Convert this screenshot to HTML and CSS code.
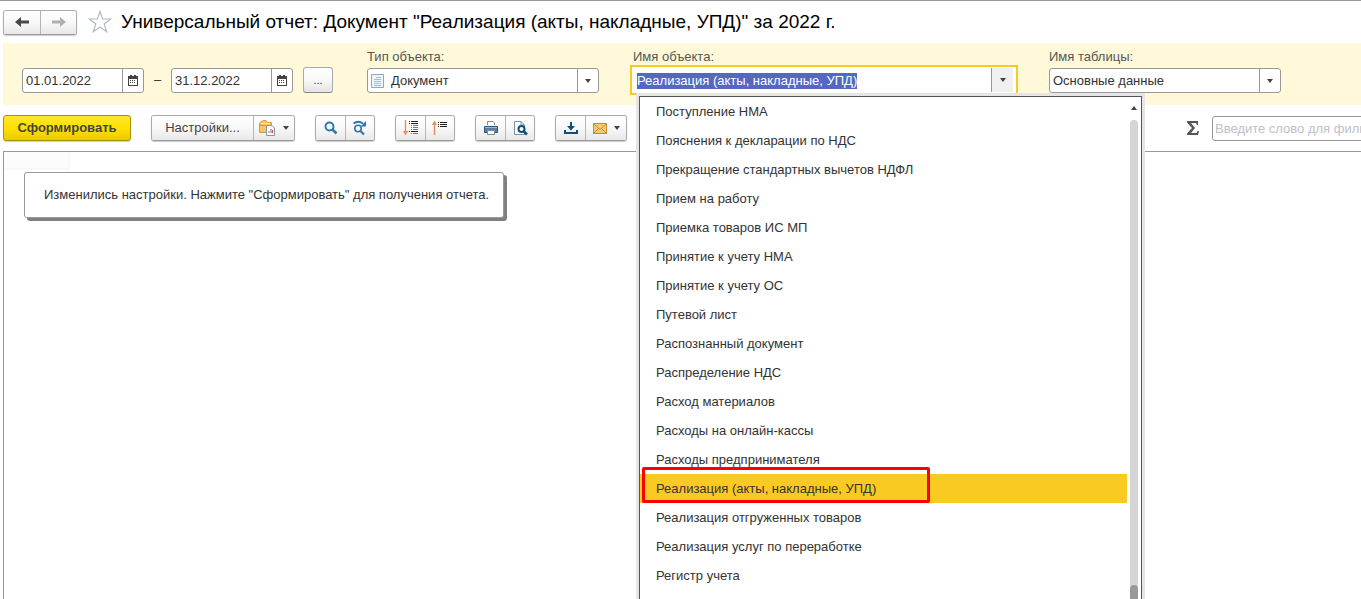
FILE: index.html
```html
<!DOCTYPE html>
<html lang="ru">
<head>
<meta charset="utf-8">
<meta name="viewport" content="width=device-width, initial-scale=1">
<title>Универсальный отчет</title>
<link rel="stylesheet" href="styles.css">
</head>
<body>
<header class="header">
  <div class="group nav">
    <button type="button" class="btn" aria-label="Назад"><svg width="16" height="12" viewBox="0 0 16 12"><path d="M1 6 7 1V4.500H15V7.500H7V11Z" fill="#4a4a4a"/></svg></button>
    <button type="button" class="btn" aria-label="Вперед"><svg width="16" height="12" viewBox="0 0 16 12"><path d="M15 6 9 1V4.500H1V7.500H9V11Z" fill="#b0b0b0"/></svg></button>
  </div>
  <button type="button" class="star" aria-label="В избранное"><svg width="24" height="24" viewBox="0 0 24 24"><path d="M12 1.5 14.6 9H22.7L16.2 13.9 18.8 21.8 12 17 5.2 21.8 7.8 13.9 1.3 9H9.4Z" fill="none" stroke="#b4bac2" stroke-width="1.200"/></svg></button>
  <h1 class="title">Универсальный отчет: Документ "Реализация (акты, накладные, УПД)" за 2022 г.</h1>
</header>

<form class="filters">
  <div class="period">
    <div class="box date">
      <input type="text" value="01.01.2022" aria-label="Начало периода">
      <button type="button" class="box-btn" aria-label="Выбрать дату начала"><svg width="10" height="11" viewBox="0 0 10 11"><path d="M0 1H10V11H0ZM1 4V10H9V4Z" fill="#444" fill-rule="evenodd"/><path d="M2 0H4V2H2ZM6 0H8V2H6ZM2 5H3V6H2ZM4 5H5V6H4ZM6 5H7V6H6ZM2 7H3V8H2ZM4 7H5V8H4ZM6 7H7V8H6Z" fill="#444"/></svg></button>
    </div>
    <span class="dash">–</span>
    <div class="box date">
      <input type="text" value="31.12.2022" aria-label="Конец периода">
      <button type="button" class="box-btn" aria-label="Выбрать дату конца"><svg width="10" height="11" viewBox="0 0 10 11"><path d="M0 1H10V11H0ZM1 4V10H9V4Z" fill="#444" fill-rule="evenodd"/><path d="M2 0H4V2H2ZM6 0H8V2H6ZM2 5H3V6H2ZM4 5H5V6H4ZM6 5H7V6H6ZM2 7H3V8H2ZM4 7H5V8H4ZM6 7H7V8H6Z" fill="#444"/></svg></button>
    </div>
    <button type="button" class="more" aria-label="Выбрать период">...</button>
  </div>

  <div class="field type">
    <label for="object-type">Тип объекта:</label>
    <div class="box pick">
      <svg class="doc" width="13" height="14" viewBox="0 0 13 14"><path d="M.5.5H12.5V13.5H.5Z" fill="#eef4f8" stroke="#8ea9bd"/><path d="M5 3.5H10M3 5.5H10M3 7.5H10M3 9.5H10M3 11.5H10" stroke="#a9bccb"/></svg>
      <select id="object-type"><option>Документ</option></select>
      <span class="mark"><svg width="6" height="4" viewBox="0 0 6 4"><path d="M0 0H6L3 4Z" fill="#444"/></svg></span>
    </div>
  </div>

  <div class="field name">
    <label for="object-name">Имя объекта:</label>
    <div class="box combo">
      <input id="object-name" type="text" value="Реализация (акты, накладные, УПД)" role="combobox" aria-expanded="true" aria-controls="object-list">
      <button type="button" class="box-btn" aria-label="Открыть список"><svg width="6" height="4" viewBox="0 0 6 4"><path d="M0 0H6L3 4Z" fill="#444"/></svg></button>
    </div>
    <div class="popup">
      <ul class="list" id="object-list" role="listbox" aria-label="Имя объекта">
        <li role="option">Поступление НМА</li>
        <li role="option">Пояснения к декларации по НДС</li>
        <li role="option">Прекращение стандартных вычетов НДФЛ</li>
        <li role="option">Прием на работу</li>
        <li role="option">Приемка товаров ИС МП</li>
        <li role="option">Принятие к учету НМА</li>
        <li role="option">Принятие к учету ОС</li>
        <li role="option">Путевой лист</li>
        <li role="option">Распознанный документ</li>
        <li role="option">Распределение НДС</li>
        <li role="option">Расход материалов</li>
        <li role="option">Расходы на онлайн-кассы</li>
        <li role="option">Расходы предпринимателя</li>
        <li role="option" class="current" aria-selected="true">Реализация (акты, накладные, УПД)</li>
        <li role="option">Реализация отгруженных товаров</li>
        <li role="option">Реализация услуг по переработке</li>
        <li role="option">Регистр учета</li>
      </ul>
      <div class="scroll">
        <svg width="6" height="4" viewBox="0 0 6 4"><path d="M0 4H6L3 0Z" fill="#444"/></svg>
        <div class="track"><div class="thumb"></div></div>
      </div>
    </div>
  </div>

  <div class="field table">
    <label for="table-name">Имя таблицы:</label>
    <div class="box pick">
      <select id="table-name"><option>Основные данные</option></select>
      <span class="mark"><svg width="6" height="4" viewBox="0 0 6 4"><path d="M0 0H6L3 4Z" fill="#444"/></svg></span>
    </div>
  </div>
</form>

<div class="toolbar">
  <button type="button" class="primary">Сформировать</button>
  <div class="group">
    <button type="button" class="btn text">Настройки...</button>
    <button type="button" class="btn wide" aria-label="Варианты отчета"><svg width="17" height="17" viewBox="0 0 17 17"><path d="M.5 3.5 2 1.5 5 .5H7L8.500 2.500H12.500V12.500H.5Z" fill="#f2c76c" stroke="#d79a3a"/><path d="M1 5.500H12" stroke="#d79a3a"/><path d="M2 3.500H11" stroke="#fbe3a6"/><path d="M7.500 5.500H13L15.500 8V15.500H7.500Z" fill="#fff" stroke="#7f9aae"/><path d="M10 11V13" stroke="#39a35a"/><path d="M12 9V13" stroke="#d44"/><path d="M13.500 10V13" stroke="#d44"/></svg><svg width="6" height="4" viewBox="0 0 6 4"><path d="M0 0H6L3 4Z" fill="#444"/></svg></button>
  </div>
  <div class="group">
    <button type="button" class="btn" aria-label="Найти"><svg width="14" height="14" viewBox="0 0 14 14"><circle cx="5.500" cy="5.500" r="4" fill="none" stroke="#3079aa" stroke-width="2"/><path d="M8.500 8.500 12.500 12.500" stroke="#3079aa" stroke-width="2.500"/></svg></button>
    <button type="button" class="btn" aria-label="Найти далее"><svg width="16" height="16" viewBox="0 0 16 16"><circle cx="6" cy="8.500" r="3.200" fill="none" stroke="#3079aa" stroke-width="1.600"/><path d="M8.500 11 12 14.500" stroke="#3079aa" stroke-width="2.200"/><path d="M1.500 3.500Q6 0 11 3.500" fill="none" stroke="#3079aa" stroke-width="2"/><path d="M14 1V6.500H8.500Z" fill="#3079aa"/></svg></button>
  </div>
  <div class="group">
    <button type="button" class="btn" aria-label="Развернуть группы"><svg width="16" height="16" viewBox="0 0 16 16"><path d="M2.500 0V13" stroke="#f28a5c" stroke-width="1.400"/><path d="M0 11H5L2.500 15.500Z" fill="#f28a5c"/><path d="M6 1.500H7M8 1.500H15M6 3.500H7M8 3.500H15" stroke="#222"/><path d="M8 5.500H9M10 5.500H15M8 7.500H9M10 7.500H15M8 9.500H9M10 9.500H15" stroke="#777"/><path d="M6 11.500H7M8 11.500H15" stroke="#222"/><path d="M8 13.500H9M10 13.500H15" stroke="#777"/></svg></button>
    <button type="button" class="btn" aria-label="Свернуть группы"><svg width="16" height="16" viewBox="0 0 16 16"><path d="M2.500 3V15" stroke="#f28a5c" stroke-width="1.400"/><path d="M0 5H5L2.500 .5Z" fill="#f28a5c"/><path d="M6 2.500H7M8 2.500H15M6 4.500H7M8 4.500H15M6 6.500H7M8 6.500H15" stroke="#222"/></svg></button>
  </div>
  <div class="group">
    <button type="button" class="btn" aria-label="Печать"><svg width="16" height="16" viewBox="0 0 16 16"><path d="M4.500 5V1.500H10L11.500 3V5" fill="#fff" stroke="#7b8fa3"/><path d="M1.500 6.500H14.500V12.500H1.500Z" fill="#5b7fa3" stroke="#2f5579"/><path d="M2 7.500H14" stroke="#9db8cf"/><path d="M4.500 10.500H11.500V14.500H4.500Z" fill="#fff" stroke="#7b8fa3"/></svg></button>
    <button type="button" class="btn" aria-label="Предварительный просмотр"><svg width="16" height="16" viewBox="0 0 16 16"><path d="M12.500 14.500H2.500V1.500H9L12.500 5Z" fill="#fff" stroke="#7b8fa3"/><path d="M9 1.500V5H12" fill="none" stroke="#7b8fa3"/><circle cx="9.500" cy="9" r="3" fill="#fff" stroke="#0b4f7c" stroke-width="2"/><path d="M11.500 11 15 14.500" stroke="#0b4f7c" stroke-width="2.500"/></svg></button>
  </div>
  <div class="group">
    <button type="button" class="btn" aria-label="Сохранить"><svg width="14" height="14" viewBox="0 0 14 14"><path d="M6 1H8V5H11L7 9.500 3 5H6Z" fill="#0b4f7c"/><path d="M1 9V12H13V9" fill="none" stroke="#0b4f7c" stroke-width="2"/></svg></button>
    <button type="button" class="btn wide last" aria-label="Отправить по почте"><svg width="14" height="11" viewBox="0 0 14 11"><path d="M.5.5H13.500V10.500H.5Z" fill="#f6cb73" stroke="#c98a2b"/><path d="M1 1 7 6.500 13 1M1 10 5.500 5.500M13 10 8.500 5.500" fill="none" stroke="#c98a2b"/></svg><svg width="6" height="4" viewBox="0 0 6 4"><path d="M0 0H6L3 4Z" fill="#444"/></svg></button>
  </div>
  <div class="search">
    <svg width="12" height="14" viewBox="0 0 12 14" role="img" aria-label="Сумма"><path d="M0 0H11V4H10L9 2H4L8 7 4 12H9.500L10.500 10H12L11 14H0V12.500L5 7 0 1.500Z" fill="#555"/></svg>
    <input class="box" type="text" placeholder="Введите слово для фильтра" aria-label="Фильтр">
  </div>
</div>

<main class="report">
  <div class="cell"></div>
  <p class="message">Изменились настройки. Нажмите "Сформировать" для получения отчета.</p>
</main>
<script src="app.js"></script>
</body>
</html>
```
FILE: styles.css
```css
*, *::before, *::after { box-sizing: border-box; }
html { height: 100%; }
body {
  margin: 0;
  height: 100%;
  overflow: hidden;
  display: flex;
  flex-direction: column;
  border-top: 1px solid #999;
  padding-left: 3px;
  background: #fff;
  color: #333;
  font: 13px/16px "Liberation Sans", Arial, sans-serif;
}
button, input, select { font: inherit; color: inherit; margin: 0; }
button { padding: 0; }
svg { display: block; flex: none; }

.header { display: flex; align-items: center; height: 42px; flex: none; }
.title { margin: 0 0 0 9px; font-size: 19px; line-height: 24px; font-weight: 400; color: #000; white-space: nowrap; }
.star { margin-left: 11px; padding: 0; border: 0; background: none; }

.group { display: flex; flex: none; height: 26px; border: 1px solid #aaa; border-bottom-color: #999; border-radius: 3px; box-shadow: 0 1px 1px #ccc; overflow: hidden; }
.btn { display: flex; align-items: center; justify-content: center; gap: 7px; border: 0; background: linear-gradient(#fff, #f8f8f8 50%, #e8e8e8); color: #444; }
.btn:first-child { width: 29px; }
.btn + .btn { width: 29px; border-left: 1px solid #b5b5b5; }
.btn.text:first-child { width: 101px; }
.btn + .btn.wide { width: 41px; }
.nav .btn:first-child { width: 36px; }
.nav .btn + .btn { width: 36px; }
.nav { height: 25px; }

.filters { display: flex; flex: none; align-items: flex-start; height: 62px; padding: 6px 0 0 19px; background: #fff9d9; }
.period { display: flex; align-items: center; margin-top: 18px; }
.dash { width: 27px; text-align: center; }
.box { height: 25px; border: 1px solid #999; border-radius: 3px; background: #fff; }
.box input, .box select { min-width: 0; border: 0; outline: 0; background: none; padding: 1px 3px 0; }
.date { display: flex; width: 122px; }
.date input { flex: 1; }
.box-btn { display: flex; align-items: center; justify-content: center; width: 21px; border: 0; border-left: 1px solid #999; background: none; }
.more { width: 30px; height: 26px; margin-left: 10px; border: 1px solid #aaa; border-bottom-color: #888; border-radius: 3px; background: linear-gradient(#fff, #f8f8f8 50%, #e4e4e4); font-size: 11px; }

.field { display: flex; flex-direction: column; position: relative; }
.field label { height: 19px; line-height: 16px; color: #555; }
.type { width: 232px; margin-left: 34px; }
.name { width: 388px; margin-left: 31px; }
.field.name label { padding-left: 3px; height: 16px; }
.table { width: 232px; margin-left: 31px; }

.pick { display: grid; grid-template-columns: auto 1fr 21px; align-items: stretch; }
.pick select { grid-column: 2 / 4; grid-row: 1; appearance: none; }
.doc { grid-column: 1; grid-row: 1; align-self: center; margin: 0 3px; }
.type select { padding-left: 4px; }
.mark { grid-column: 3; grid-row: 1; display: flex; align-items: center; justify-content: center; border-left: 1px solid #999; pointer-events: none; }

.combo { display: flex; height: 30px; border: 2px solid #f9ca21; border-radius: 0; padding: 1px; }
.combo input { flex: 1; padding: 1px 4px 0; }
.combo .box-btn { width: 24px; border-right: 2px solid #fff; background: #f0f0f0; }
.combo input::selection { background: #5468c2; color: #fff; }

.popup {
  position: absolute;
  z-index: 2;
  top: 47px;
  left: 9px;
  display: flex;
  width: 503px;
  height: calc(100vh - 96px);
  border: 1px solid #555;
  border-bottom: 0;
  background: #fff;
  box-shadow: 0 0 0 3px #e5e5e5;
}
.list { flex: 1; margin: 0; padding: 0; list-style: none; }
.list li { position: relative; height: 29px; padding-left: 16px; line-height: 29px; white-space: nowrap; }
.list .current { background: #f9ca21; }
.list .current::after { content: ""; position: absolute; left: 2px; top: -7px; width: 288px; height: 36px; border: 3px solid #f00; border-radius: 2px; }
.scroll { display: flex; flex-direction: column; align-items: center; width: 14px; padding-top: 9px; }
.track { width: 8px; flex: 1; margin-top: 10px; padding-top: 465px; border-radius: 4px 4px 0 0; background: #d5d5d5; }
.thumb { height: 100%; border-radius: 4px 4px 0 0; background: #999; }

.toolbar { display: flex; flex: none; align-items: center; gap: 20px; height: 46px; }
.primary { flex: none; width: 128px; height: 26px; border: 1px solid #a89400; border-radius: 3px; background: linear-gradient(#ffe72e, #ffe000 50%, #ebcb00); box-shadow: 0 1px 1px #ccc; font-weight: 700; color: #444; }
.search { display: flex; align-items: center; gap: 13px; margin: 0 -51px 0 auto; }
.search .box { width: 200px; padding: 0 2px; }
.search .box::placeholder { color: #c0c0c8; opacity: 1; }

.report { flex: 1; min-height: 0; border: 1px solid #999; border-width: 1px 0 0 1px; }
.cell { width: 66px; height: 18px; border: 2px solid #f9f9f9; border-width: 0 2px 2px 0; background: #fcfcfc; }
.message { width: fit-content; margin: 2px 0 0 20px; padding: 14px 14px 14px 19px; border: 1px solid #999; border-radius: 3px; background: #fff; box-shadow: 3px 3px 0 #808080; }
```
FILE: app.js
```js
const nameInput = document.getElementById("object-name");
nameInput.focus();
nameInput.select();
```
